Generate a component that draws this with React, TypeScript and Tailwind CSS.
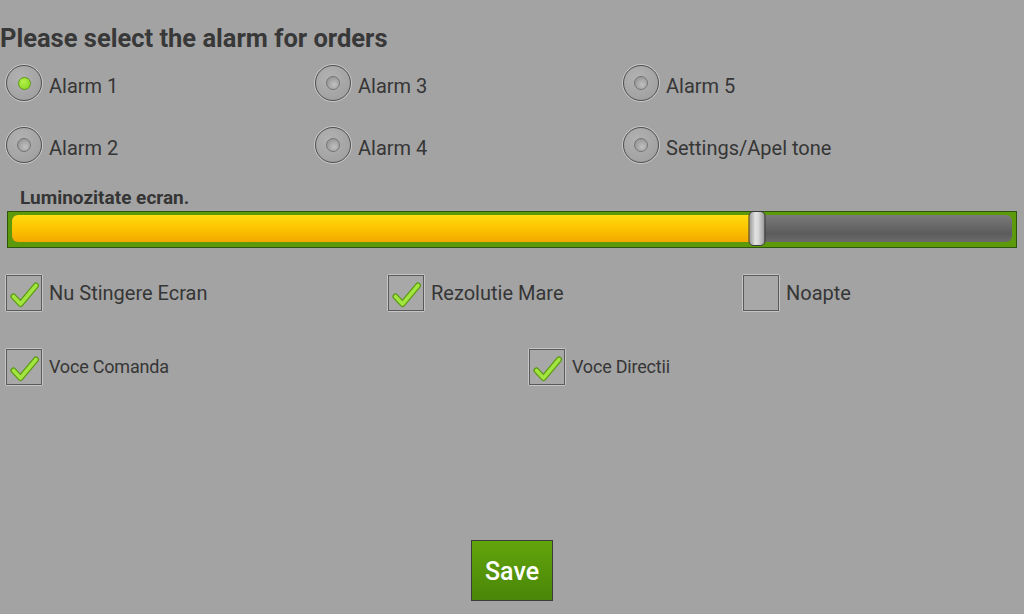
import { ReactNode } from "react";

function Radio({ checked }: { checked?: boolean }) {
  return (
    <div className="flex h-[38px] w-[38px] shrink-0 items-center justify-center rounded-full border border-[#c9c9c9]">
      <div className="flex h-[36px] w-[36px] items-center justify-center rounded-full border-[1.5px] border-[#505050] bg-[radial-gradient(circle_at_40%_35%,#b2b2b2,#9c9c9c)]">
        {checked ? (
          <div className="h-[13px] w-[13px] rounded-full border border-[#5c9a12] bg-[radial-gradient(circle_at_40%_35%,#b4f04a,#80d41c)]" />
        ) : (
          <div className="h-[14px] w-[14px] rounded-full border border-[#747474] bg-[radial-gradient(circle_at_60%_65%,#c0c0c0,#8a8a8a)]" />
        )}
      </div>
    </div>
  );
}

function RadioOption({ label, checked, width }: { label: string; checked?: boolean; width?: string }) {
  return (
    <div className={`flex items-center gap-[6px] ${width ?? ""}`}>
      <Radio checked={checked} />
      <span className="mt-[5px] text-[20px] leading-[24px] text-[#363636]">{label}</span>
    </div>
  );
}

function CheckBox({ checked }: { checked?: boolean }) {
  return (
    <div className="h-[38px] w-[38px] shrink-0 rounded-[2px] border border-[#c6c6c6]">
      <div className="relative h-full w-full border-[1.5px] border-[#5a5a5a] bg-[#a8a8a8]">
        {checked ? (
          <svg viewBox="0 0 38 38" className="absolute left-[-2.5px] top-[-2.5px] h-[38px] w-[38px]">
            <polyline points="8.5,22.5 15.5,30 31,11.5" fill="none" stroke="#5a9912" strokeWidth="6" strokeLinecap="round" strokeLinejoin="round" />
            <polyline points="8.5,22.5 15.5,30 31,11.5" fill="none" stroke="#a2e440" strokeWidth="3.6" strokeLinecap="round" strokeLinejoin="round" />
          </svg>
        ) : null}
      </div>
    </div>
  );
}

function CheckOption({ label, checked, width, small }: { label: ReactNode; checked?: boolean; width?: string; small?: boolean }) {
  return (
    <div className={`flex items-center gap-[6px] ${width ?? ""}`}>
      <CheckBox checked={checked} />
      <span className={`${small ? "text-[18px] tracking-[-0.2px]" : "text-[20px]"} leading-[24px] text-[#363636]`}>{label}</span>
    </div>
  );
}

export default function App() {
  const level = 0.745;

  return (
    <div className="flex h-[614px] w-[1024px] flex-col bg-[#a3a3a3] font-['Roboto',sans-serif]">
      <h1 className="pt-[23px] text-[25.5px] font-bold leading-[30px] text-[#383838]">Please select the alarm for orders</h1>

      <div className="mt-[11px] flex flex-col gap-[24px] pl-[5px]">
        <div className="flex">
          <RadioOption label="Alarm 1" checked width="w-[309px]" />
          <RadioOption label="Alarm 3" width="w-[308px]" />
          <RadioOption label="Alarm 5" />
        </div>
        <div className="flex">
          <RadioOption label="Alarm 2" width="w-[309px]" />
          <RadioOption label="Alarm 4" width="w-[308px]" />
          <RadioOption label="Settings/Apel tone" />
        </div>
      </div>

      <div className="mt-[23px] pl-[20px] text-[19px] font-bold leading-[22px] text-[#353535]">Luminozitate ecran.</div>

      <div className="mx-[7px] mt-[2px] h-[37px] border border-[#2f5410] bg-[#5c9a0c] px-[4px] pb-[5px] pt-[3px]">
        <div className="relative flex h-full rounded-[6px] bg-[linear-gradient(#7a7a7a,#5c5c5c_70%,#6a6a6a)]">
          <div
            className="h-full rounded-l-[6px] bg-[linear-gradient(#ffdc10,#fcc400_50%,#f2a800)]"
            style={{ width: `${level * 100}%` }}
          />
          <div
            className="absolute top-[-4px] h-[35px] w-[17px] -translate-x-1/2 rounded-[5px] border border-[#3a3a3a] bg-[linear-gradient(90deg,#9a9a9a,#e2e2e2_40%,#d6d6d6_60%,#9a9a9a)]"
            style={{ left: `${level * 100}%` }}
          />
        </div>
      </div>

      <div className="mt-[26px] flex pl-[5px]">
        <CheckOption label="Nu Stingere Ecran" checked width="w-[382px]" />
        <CheckOption label="Rezolutie Mare" checked width="w-[355px]" />
        <CheckOption label="Noapte" />
      </div>

      <div className="mt-[36px] flex pl-[5px]">
        <CheckOption label="Voce Comanda" checked small width="w-[523px]" />
        <CheckOption label="Voce Directii" checked small />
      </div>

      <div className="mb-[13px] mt-auto flex justify-center">
        <button
          type="button"
          className="h-[61px] w-[82px] border border-[#3c3c3c] bg-[linear-gradient(#62a40c,#4a8608)] pt-[3px] text-[25px] font-medium text-white"
        >
          Save
        </button>
      </div>
    </div>
  );
}
